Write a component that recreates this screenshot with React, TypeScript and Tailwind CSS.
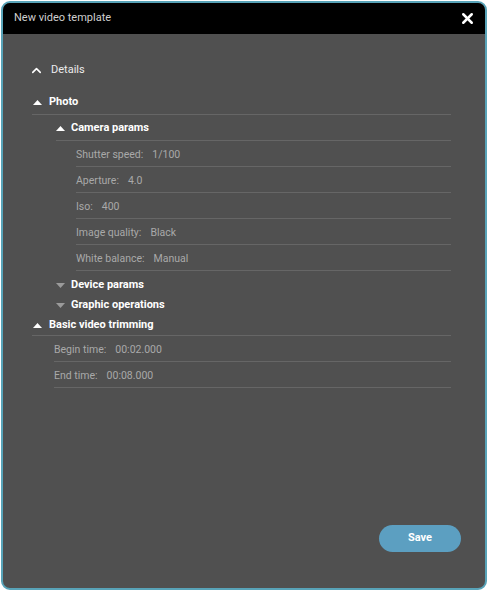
import { ChevronUp, X } from "lucide-react";

const cameraParams = [
  { label: "Shutter speed:", value: "1/100" },
  { label: "Aperture:", value: "4.0" },
  { label: "Iso:", value: "400" },
  { label: "Image quality:", value: "Black" },
  { label: "White balance:", value: "Manual" },
];

const trimming = [
  { label: "Begin time:", value: "00:02.000" },
  { label: "End time:", value: "00:08.000" },
];

function Caret({ open }: { open: boolean }) {
  return open ? (
    <svg width="9" height="5" viewBox="0 0 9 5" className="shrink-0">
      <path d="M0 5 L4.5 0 L9 5 Z" fill="#ffffff" />
    </svg>
  ) : (
    <svg width="9" height="5" viewBox="0 0 9 5" className="shrink-0">
      <path d="M0 0 L4.5 5 L9 0 Z" fill="#9a9a9a" />
    </svg>
  );
}

function ParamRow({ label, value }: { label: string; value: string }) {
  return (
    <div className="flex h-[26px] items-center border-b border-[#666666] pt-[2px] text-[10.5px] text-[#a9a9a9]">
      <span>{label}</span>
      <span className="ml-[9px]">{value}</span>
    </div>
  );
}

export default function App() {
  return (
    <div className="h-[591px] w-[488px] bg-white p-[1px] font-['Roboto',sans-serif]">
      <div className="flex h-[589px] flex-col overflow-hidden rounded-[9px] border-2 border-[#58a3b8] bg-[#505050]">
        <div className="flex h-[31px] shrink-0 items-center justify-between bg-black pl-[11px] pr-[9px]">
          <span className="text-[11px] text-[#cfcfcf]">New video template</span>
          <X size={17} strokeWidth={3.5} className="text-white" />
        </div>

        <div className="flex flex-1 flex-col pl-[26px] pr-[34px]">
          <div className="mt-[27px] flex h-[18px] items-center gap-[7px] text-[11px] text-[#ececec]">
            <ChevronUp size={15} strokeWidth={2.5} className="text-white" />
            <span>Details</span>
          </div>

          <div className="mt-[11px] ml-[3px]">
            <div className="flex h-[25px] items-center gap-[7px] border-b border-[#666666] pl-[1px] text-[11px] font-bold text-white">
              <Caret open />
              <span>Photo</span>
            </div>

            <div className="ml-[24px]">
              <div className="flex h-[26px] items-center gap-[6px] border-b border-[#666666] pt-[1px] text-[11px] font-bold text-white">
                <Caret open />
                <span>Camera params</span>
              </div>
              <div className="ml-[20px]">
                {cameraParams.map((p) => (
                  <ParamRow key={p.label} label={p.label} value={p.value} />
                ))}
              </div>
              <div className="flex h-[24px] items-center gap-[6px] pt-[4px] text-[11px] font-bold text-white">
                <Caret open={false} />
                <span>Device params</span>
              </div>
              <div className="flex h-[20px] items-center gap-[6px] pt-[1px] text-[11px] font-bold text-white">
                <Caret open={false} />
                <span>Graphic operations</span>
              </div>
            </div>

            <div className="flex h-[21px] items-center gap-[7px] border-b border-[#666666] pt-[1px] pb-[1px] pl-[1px] text-[11px] font-bold text-white">
              <Caret open />
              <span>Basic video trimming</span>
            </div>
            <div className="ml-[22px]">
              {trimming.map((p) => (
                <ParamRow key={p.label} label={p.label} value={p.value} />
              ))}
            </div>
          </div>

          <div className="mt-auto mb-[36px] flex justify-end">
            <button className="mr-[-10px] h-[27px] w-[82px] rounded-full bg-[#5c9fc1] text-[11px] font-bold text-white">
              Save
            </button>
          </div>
        </div>
      </div>
    </div>
  );
}
